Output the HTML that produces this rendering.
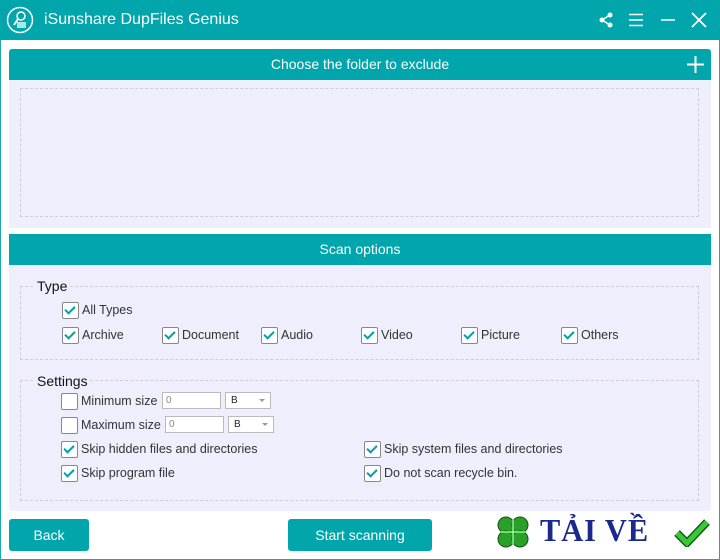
<!DOCTYPE html>
<html><head><style>
*{box-sizing:border-box;margin:0;padding:0}
body{width:720px;height:560px;background:#fff;font-family:"Liberation Sans",sans-serif;position:relative;overflow:hidden;font-size:12px;color:#222}
.win{position:absolute;left:0;top:0;width:720px;height:560px;border:1px solid #1aa9ae}
.title{position:absolute;left:0;top:0;width:720px;height:40px;background:#00a6ab;color:#fff}
.title .t{position:absolute;left:44px;top:11px;font-size:16px}
.hdr{position:absolute;left:9px;width:702px;height:31px;background:#00a6ab;color:#fff;text-align:center;font-size:14px;line-height:31px;border-radius:3px 3px 0 0}
.area{position:absolute;left:9px;width:702px;background:#eeeefc}
.dash{position:absolute;border:1px dashed #d4cbd8}
.leg{position:absolute;font-size:14px;color:#111;background:#eeeefc;padding:0 2px}
.cb{position:absolute;font-size:12.5px;color:#333;line-height:17px;padding-left:20px}
.cb:before{content:"";position:absolute;left:0;top:0;width:15px;height:15px;border:1px solid #888;border-radius:2px;background:#fff}
.cb.c:after{content:"";position:absolute;left:5px;top:2px;width:4px;height:8px;border:solid #00a0a6;border-width:0 2px 2px 0;transform:rotate(45deg)}
.inp{position:absolute;height:17px;border:1px solid #bbb;background:#fff;font-size:10px;color:#888;padding-left:3px;line-height:15px}
.sel{position:absolute;height:17px;border:1px solid #bbb;background:#fff;font-size:10px;color:#222;padding-left:5px;line-height:15px}
.sel:after{content:"";position:absolute;right:5px;top:6px;border:3px solid transparent;border-top:3px solid #999}
.btn{position:absolute;top:519px;height:32px;background:#00a6ab;color:#fff;font-size:14px;text-align:center;line-height:32px;border-radius:3px}
</style></head><body>
<div class="win"></div>
<div class="title">
<svg style="position:absolute;left:6px;top:6px" width="28" height="28" viewBox="0 0 28 28"><circle cx="14" cy="14" r="12.5" fill="none" stroke="#fff" stroke-width="1.5"/><circle cx="15" cy="10" r="4" fill="none" stroke="#fff" stroke-width="1.5"/><path d="M12 13 L8 19" stroke="#fff" stroke-width="2"/><rect x="11" y="16" width="9" height="6" fill="#cfe" opacity=".8"/></svg>
<div class="t">iSunshare DupFiles Genius</div>
<svg style="position:absolute;left:598px;top:12px" width="16" height="16" viewBox="0 0 16 16"><circle cx="12" cy="3" r="2.5" fill="#fff"/><circle cx="4" cy="8" r="2.5" fill="#fff"/><circle cx="12" cy="13" r="2.5" fill="#fff"/><path d="M12 3L4 8L12 13" stroke="#fff" stroke-width="1.5" fill="none"/></svg>
<svg style="position:absolute;left:628px;top:13px" width="16" height="14"><path d="M1 1.5H15M1 7H15M1 12.5H15" stroke="#fff" stroke-width="1.5"/></svg>
<svg style="position:absolute;left:660px;top:13px" width="16" height="14"><path d="M1 7H15" stroke="#fff" stroke-width="1.5"/></svg>
<svg style="position:absolute;left:690px;top:12px" width="18" height="16"><path d="M2 1L16 15M16 1L2 15" stroke="#fff" stroke-width="1.8"/></svg>
</div>
<div class="hdr" style="top:49px">Choose the folder to exclude
<svg style="position:absolute;right:7px;top:7px" width="17" height="17"><path d="M8.5 0V17M0 8.5H17" stroke="#fff" stroke-width="2"/></svg></div>
<div class="area" style="top:80px;height:148px"></div>
<div class="dash" style="left:20px;top:88px;width:679px;height:129px"></div>
<div class="hdr" style="top:234px;border-radius:0">Scan options</div>
<div class="area" style="top:265px;height:246px;border-radius:0 0 4px 4px"></div>
<div class="dash" style="left:20px;top:286px;width:679px;height:74px"></div>
<div class="leg" style="left:35px;top:278px">Type</div>
<div class="cb c" style="left:62px;top:302px">All Types</div>
<div class="cb c" style="left:62px;top:327px">Archive</div>
<div class="cb c" style="left:162px;top:327px">Document</div>
<div class="cb c" style="left:261px;top:327px">Audio</div>
<div class="cb c" style="left:361px;top:327px">Video</div>
<div class="cb c" style="left:461px;top:327px">Picture</div>
<div class="cb c" style="left:561px;top:327px">Others</div>
<div class="dash" style="left:20px;top:380px;width:679px;height:121px"></div>
<div class="leg" style="left:35px;top:373px">Settings</div>
<div class="cb" style="left:61px;top:393px">Minimum size</div>
<div class="inp" style="left:162px;top:392px;width:59px">0</div>
<div class="sel" style="left:225px;top:392px;width:46px">B</div>
<div class="cb" style="left:61px;top:417px">Maximum size</div>
<div class="inp" style="left:165px;top:416px;width:59px">0</div>
<div class="sel" style="left:228px;top:416px;width:46px">B</div>
<div class="cb c" style="left:61px;top:441px">Skip hidden files and directories</div>
<div class="cb c" style="left:61px;top:465px">Skip program file</div>
<div class="cb c" style="left:364px;top:441px">Skip system files and directories</div>
<div class="cb c" style="left:364px;top:465px">Do not scan recycle bin.</div>
<div class="btn" style="left:9px;width:80px">Back</div>
<div class="btn" style="left:288px;width:144px">Start scanning</div>
<div style="position:absolute;left:494px;top:514px;width:218px;height:42px;background:#fff"></div>
<svg style="position:absolute;left:495px;top:514px" width="36" height="36" viewBox="0 0 36 36"><g fill="#2aa02a" stroke="#145214" stroke-width="1"><circle cx="11" cy="11" r="8"/><circle cx="25" cy="11" r="8"/><circle cx="11" cy="25" r="8"/><circle cx="25" cy="25" r="8"/></g><path d="M18 6V30M6 18H30" stroke="#8f8" stroke-width="1.5"/></svg>
<div style="position:absolute;left:540px;top:512px;font-family:'Liberation Serif',serif;font-weight:bold;font-size:32px;color:#1a2a8c;letter-spacing:1px;transform:scaleX(0.95);transform-origin:left">TẢI VỀ</div>
<svg style="position:absolute;left:674px;top:517px" width="36" height="30"><path d="M3 16L13 26L33 5" stroke="#1a5a1a" stroke-width="8" fill="none"/><path d="M3 16L13 26L33 5" stroke="#3c3" stroke-width="5" fill="none"/></svg>
</body></html>
